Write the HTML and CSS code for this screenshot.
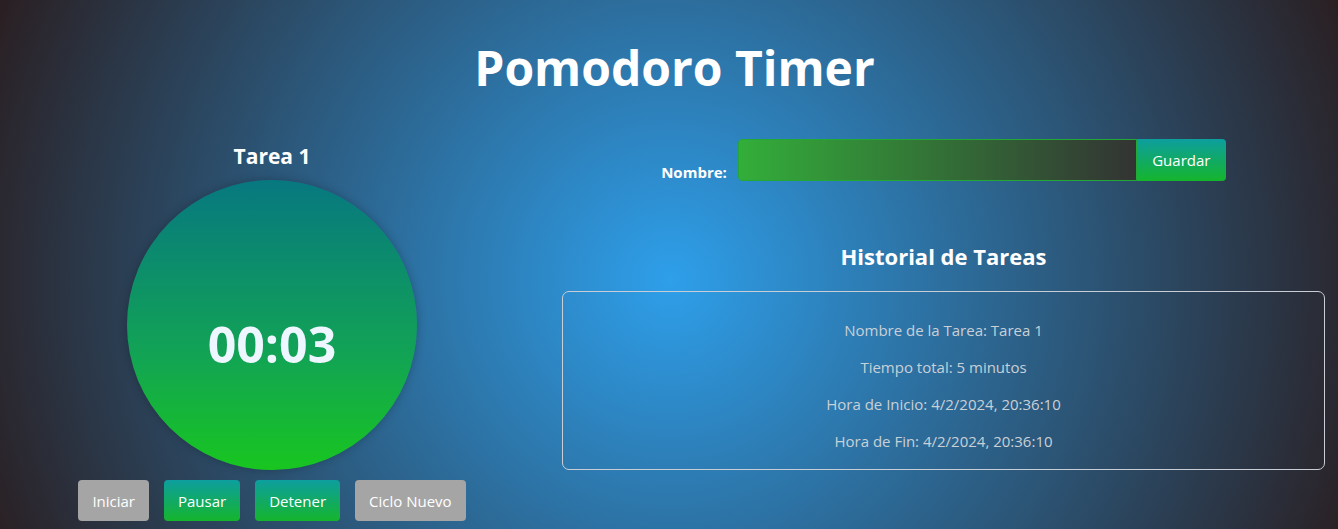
FILE: index.html
```html
<!DOCTYPE html>
<html lang="es">
<head>
<meta charset="utf-8">
<title>Pomodoro Timer</title>
<link rel="stylesheet" href="styles.css">
</head>
<body>
<h1 class="title">Pomodoro Timer</h1>
<main class="layout">
  <section class="timer-col">
    <h2 class="task-name">Tarea 1</h2>
    <div class="circle"><span class="time">00:03</span></div>
    <div class="controls">
      <button class="btn btn-gray">Iniciar</button>
      <button class="btn btn-green">Pausar</button>
      <button class="btn btn-green">Detener</button>
      <button class="btn btn-gray">Ciclo Nuevo</button>
    </div>
  </section>
  <section class="side-col">
    <form class="name-form">
      <label class="name-label">Nombre:</label>
      <input class="name-input" type="text">
      <button type="button" class="save-btn">Guardar</button>
    </form>
    <h2 class="history-title">Historial de Tareas</h2>
    <div class="history-box">
      <p>Nombre de la Tarea: Tarea 1</p>
      <p>Tiempo total: 5 minutos</p>
      <p>Hora de Inicio: 4/2/2024, 20:36:10</p>
      <p>Hora de Fin: 4/2/2024, 20:36:10</p>
    </div>
  </section>
</main>
</body>
</html>
```
FILE: styles.css
```css
html, body {
  margin: 0;
  height: 100%;
}
body {
  font-family: "Open Sans", "Noto Sans", sans-serif;
  color: #fff;
  background: radial-gradient(circle farthest-corner at 670px 280px, #2e9fea 0%, #2a1f22 100%);
  overflow: hidden;
}
.title {
  margin: 0;
  padding: 36px 0 0 11px;
  height: 72px;
  text-align: center;
  font-size: 48px;
  font-weight: 700;
  line-height: 64px;
}
.layout {
  display: flex;
}
.timer-col {
  width: 544px;
  display: flex;
  flex-direction: column;
  align-items: center;
}
.task-name {
  margin: 33px 0 0;
  font-size: 21px;
  font-weight: 700;
  line-height: 30px;
  height: 39px;
}
.circle {
  width: 290px;
  height: 290px;
  border-radius: 50%;
  background: linear-gradient(to bottom, #077880, #12a355 60%, #18c61f);
  display: flex;
  align-items: center;
  justify-content: center;
  box-shadow: 0 0 10px rgba(0, 0, 0, 0.25);
}
.time {
  font-size: 50px;
  font-weight: 700;
  color: #eef6ff;
  margin-top: 38px;
}
.controls {
  display: flex;
  gap: 15px;
  margin-top: 10px;
}
.btn {
  font-family: inherit;
  font-size: 15px;
  color: #fff;
  border: none;
  border-radius: 4px;
  height: 41px;
  padding: 0 14px;
}
.btn-gray {
  background: #a5a5a5;
}
.btn-green {
  background: linear-gradient(to bottom, #0d9e9f, #15b52c);
}
.side-col {
  flex: 1;
  padding: 31px 13px 0 18px;
  display: flex;
  flex-direction: column;
  align-items: center;
}
.name-form {
  display: flex;
  align-items: flex-end;
  height: 42px;
}
.name-label {
  font-size: 15px;
  font-weight: 700;
  line-height: 18px;
  margin-right: 11px;
}
.name-input {
  width: 399px;
  height: 42px;
  box-sizing: border-box;
  border: 1px solid #23a836;
  border-radius: 4px 0 0 4px;
  background: linear-gradient(to right, #33ae3a, #333333);
  outline: none;
}
.save-btn {
  font-family: inherit;
  font-size: 15px;
  color: #fff;
  width: 89px;
  height: 42px;
  border: none;
  border-radius: 0 4px 4px 0;
  background: linear-gradient(to bottom, #0d9e9f, #15b52c);
}
.history-title {
  margin: 60px 0 0;
  font-size: 22px;
  font-weight: 700;
  line-height: 30px;
  height: 50px;
}
.history-box {
  align-self: stretch;
  border: 1px solid #c9ced6;
  border-radius: 7px;
  padding: 11px 0 1px;
  text-align: center;
}
.history-box p {
  margin: 17px 0;
  font-size: 15px;
  line-height: 20px;
  color: #c9d0d7;
}
```
